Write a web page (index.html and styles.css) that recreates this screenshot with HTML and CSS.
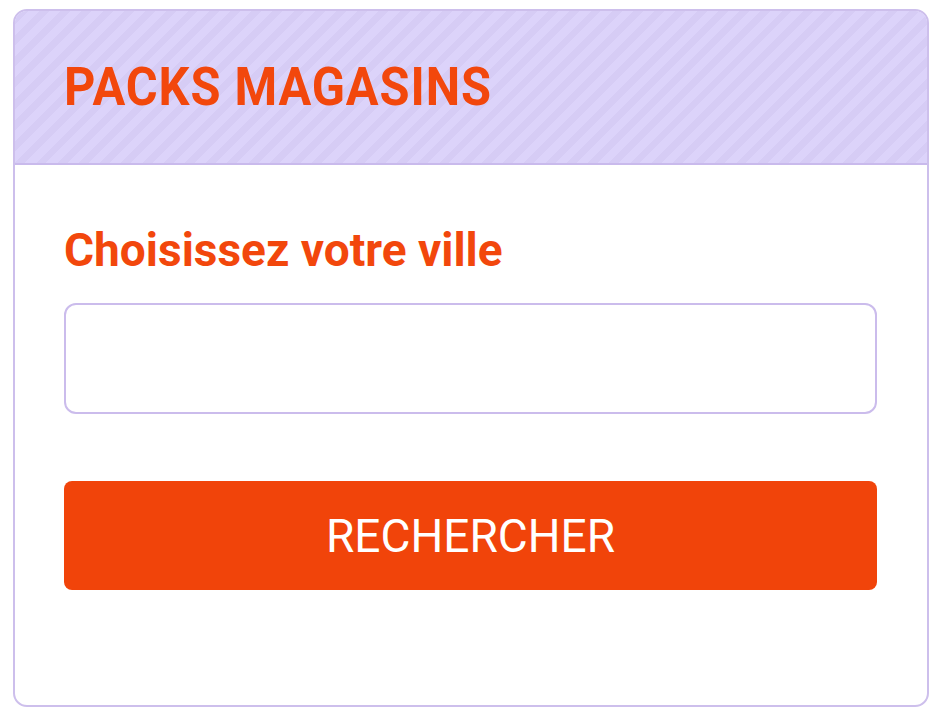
FILE: index.html
```html
<!DOCTYPE html>
<html lang="fr">
<head>
    <meta charset="UTF-8">
    <meta name="viewport" content="width=device-width, initial-scale=1.0">
    <title>Packs magasins</title>
    <link rel="stylesheet" href="styles.css">
</head>
<body>
    <!-- Store finder widget -->
    <div class="store-box">
        <div class="store-head">
            <h2 class="store-title">PACKS MAGASINS</h2>
        </div>
        <form class="store-form" onsubmit="return false;">
            <label class="city-label" for="city">Choisissez votre ville</label>
            <input class="city-input" type="text" id="city" name="city">
            <button class="search-btn" type="submit">RECHERCHER</button>
        </form>
    </div>
</body>
</html>
```

FILE: styles.css
```css
/* Reset */
* {
    margin: 0;
    padding: 0;
    box-sizing: border-box;
}

body {
    background: #fff;
    font-family: 'Roboto', 'Liberation Sans', sans-serif;
    padding: 9px 10px 0 13px;
}

/* Box */
.store-box {
    width: 916px;
    height: 698px;
    border: 2px solid #cdbfec;
    border-radius: 14px;
    overflow: hidden;
    background: #fff;
}

.store-head {
    height: 154px;
    display: flex;
    align-items: center;
    padding-left: 49px;
    border-bottom: 2px solid #c9baec;
    background-color: #dcd3fa;
    background-image: repeating-linear-gradient(
        -45deg,
        #dcd3fa 0,
        #dcd3fa 8px,
        #d6ccf5 8px,
        #d6ccf5 15px
    );
}

.store-title {
    font-size: 53px;
    font-weight: 700;
    color: #f2470c;
    letter-spacing: 1px;
    transform: scaleX(0.92);
    transform-origin: left center;
    white-space: nowrap;
}

/* Form */
.store-form {
    display: flex;
    flex-direction: column;
    padding: 62px 50px 0 49px;
}

.city-label {
    font-size: 46px;
    line-height: 1;
    font-weight: 700;
    color: #f2470c;
    margin-bottom: 30px;
}

.city-input {
    height: 111px;
    border: 2px solid #cbbcec;
    border-radius: 12px;
    background: #fff;
    outline: none;
    font-size: 40px;
    padding: 0 20px;
    font-family: inherit;
}

.search-btn {
    margin-top: 67px;
    height: 109px;
    border: none;
    border-radius: 8px;
    background: #f1440a;
    color: #fff;
    font-family: inherit;
    font-size: 46px;
    font-weight: 400;
    cursor: pointer;
}
```
